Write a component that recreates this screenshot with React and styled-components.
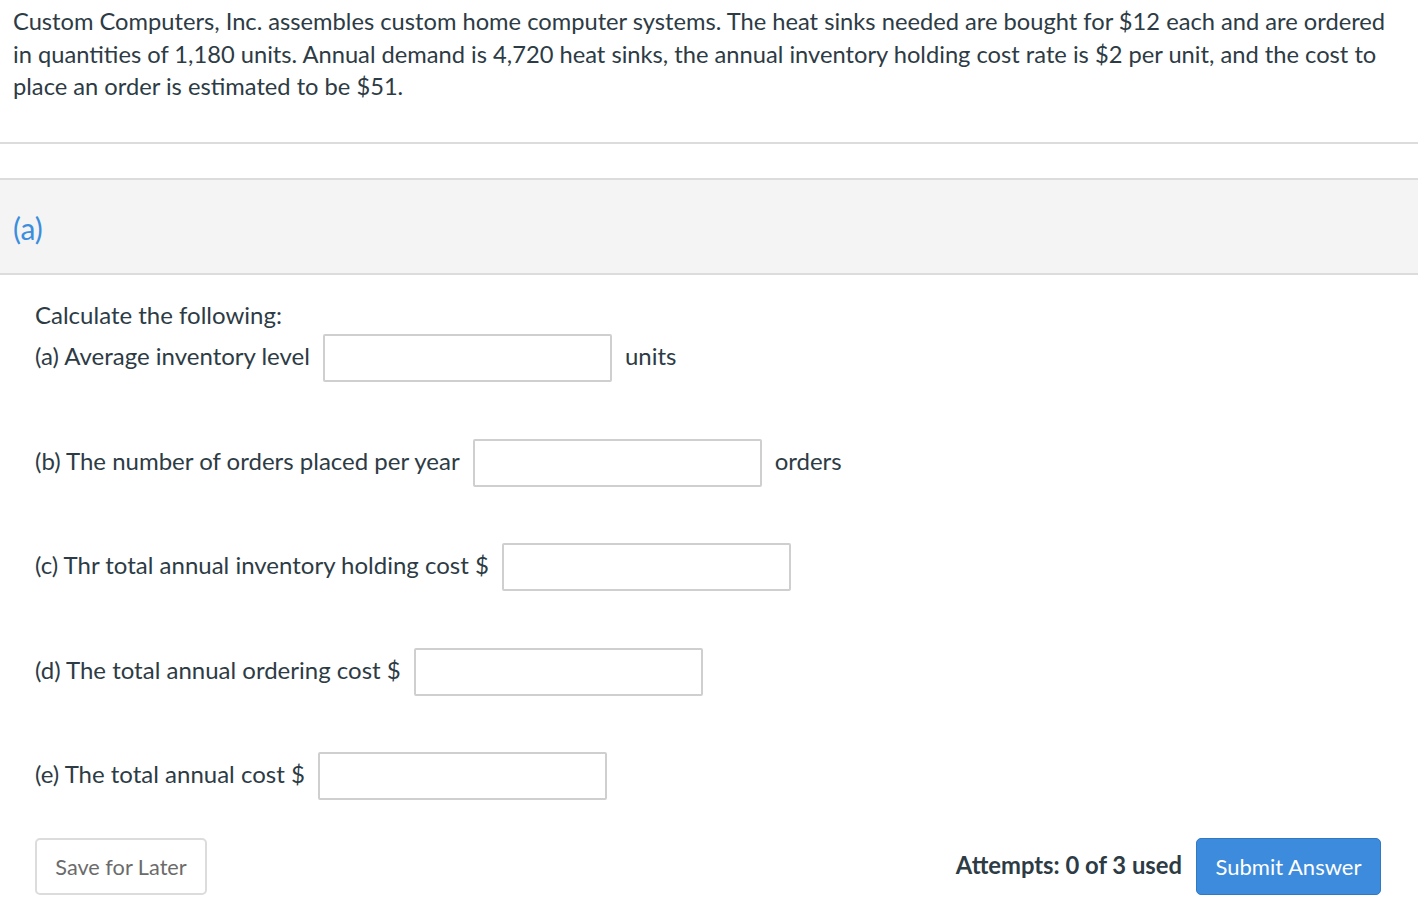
import styled, { createGlobalStyle } from "styled-components";

const GlobalStyle = createGlobalStyle`
  body {
    margin: 0;
    background: #fff;
    font-family: Lato, "Liberation Sans", sans-serif;
    color: #2d3b45;
  }
`;

const Page = styled.div`
  width: 1418px;
  min-height: 906px;
`;

const Problem = styled.p`
  margin: 0;
  padding: 5px 20px 0 13px;
  font-size: 23.7px;
  line-height: 32.5px;
  height: 144px;
  box-sizing: border-box;
  border-bottom: 2px solid #dcdcdc;
`;

const Spacer = styled.div`
  height: 34px;
`;

const PartHeader = styled.div`
  background: #f4f4f4;
  border-top: 2px solid #dcdcdc;
  border-bottom: 2px solid #dcdcdc;
  height: 97px;
  box-sizing: border-box;
  display: flex;
  align-items: center;
  padding: 2px 0 0 13px;
  font-size: 30px;
  color: #3b8ddd;
`;

const Body = styled.div`
  padding: 25px 37px 0 35px;
  font-size: 24px;
`;

const Intro = styled.div`
  line-height: 30px;
  margin-bottom: 4px;
`;

const Row = styled.div`
  display: flex;
  align-items: center;
  gap: 13px;
  height: 48px;
  margin-bottom: ${(p) => p.$gap}px;
`;

const Label = styled.span`
  padding-bottom: 5px;
`;

const Answer = styled.input`
  width: 289px;
  height: 48px;
  box-sizing: border-box;
  border: 2px solid #cfcfcf;
  border-radius: 2px;
  background: #fff;
  font-family: inherit;
  font-size: 20px;
`;

const Footer = styled.div`
  display: flex;
  align-items: center;
  justify-content: space-between;
`;

const SaveButton = styled.button`
  width: 172px;
  height: 57px;
  background: #fff;
  border: 2px solid #dcdcdc;
  border-radius: 5px;
  font-family: inherit;
  font-size: 21.7px;
  color: #6b6b6b;
`;

const Actions = styled.div`
  display: flex;
  align-items: center;
  gap: 14px;
`;

const Attempts = styled.span`
  font-weight: 700;
  font-size: 23.8px;
  color: #2d3b45;
  padding-bottom: 3px;
`;

const SubmitButton = styled.button`
  width: 185px;
  height: 57px;
  background: #3d8bdc;
  border: 1px solid #3279c4;
  border-radius: 5px;
  color: #fff;
  font-family: inherit;
  font-size: 22px;
`;

const rows = [
  { label: "(a) Average inventory level", unit: "units" },
  { label: "(b) The number of orders placed per year", unit: "orders" },
  { label: "(c) Thr total annual inventory holding cost $" },
  { label: "(d) The total annual ordering cost $" },
  { label: "(e) The total annual cost $" },
];

export default function App() {
  return (
    <Page>
      <GlobalStyle />
      <Problem>
        Custom Computers, Inc. assembles custom home computer systems. The heat
        sinks needed are bought for $12 each and are ordered in quantities of
        1,180 units. Annual demand is 4,720 heat sinks, the annual inventory
        holding cost rate is $2 per unit, and the cost to place an order is
        estimated to be $51.
      </Problem>
      <Spacer />
      <PartHeader>(a)</PartHeader>
      <Body>
        <Intro>Calculate the following:</Intro>
        {rows.map((r, i) => (
          <Row key={i} $gap={i === rows.length - 1 ? 38 : 56.5}>
            <Label>{r.label}</Label>
            <Answer type="text" />
            {r.unit && <Label>{r.unit}</Label>}
          </Row>
        ))}
        <Footer>
          <SaveButton>Save for Later</SaveButton>
          <Actions>
            <Attempts>Attempts: 0 of 3 used</Attempts>
            <SubmitButton>Submit Answer</SubmitButton>
          </Actions>
        </Footer>
      </Body>
    </Page>
  );
}
